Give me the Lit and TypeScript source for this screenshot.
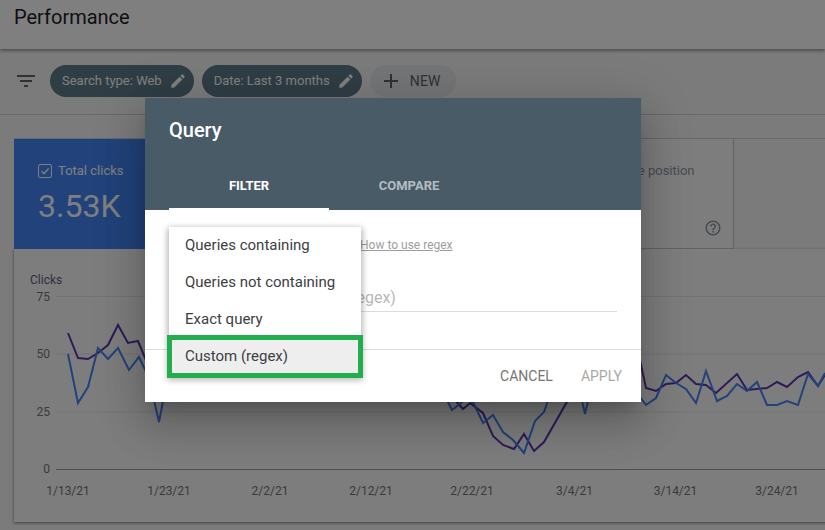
import { LitElement, html, css, svg } from "lit";
import { customElement } from "lit/decorators.js";

const PENCIL = "M3 17.25V21h3.75L17.81 9.94l-3.75-3.75L3 17.25zM20.71 7.04c.39-.39.39-1.02 0-1.41l-2.34-2.34c-.39-.39-1.02-.39-1.41 0l-1.83 1.83 3.75 3.75 1.83-1.83z";
const FILTER = "M10 18h4v-2h-4v2zM3 6v2h18V6H3zm3 7h12v-2H6v2z";
const ADD = "M19 13h-6v6h-2v-6H5v-2h6V5h2v6h6v2z";
const HELP = "M11 18h2v-2h-2v2zm1-16C6.48 2 2 6.48 2 12s4.48 10 10 10 10-4.48 10-10S17.52 2 12 2zm0 18c-4.41 0-8-3.59-8-8s3.59-8 8-8 8 3.59 8 8-3.59 8-8 8zm0-14c-2.21 0-4 1.79-4 4h2c0-1.1.9-2 2-2s2 .9 2 2c0 2-3 1.75-3 5h2c0-2.25 3-2.5 3-5 0-2.21-1.79-4-4-4z";

const BLUE = "68,354 78,403 88,387 98,348 108,359 118,348 129,370 139,357 149,378 159,422 169,370 300,370 440,380 448,402 452,410 461,403 464,400 473,402 483,423 493,415 503,432 513,440 524,453 535,421 544,412 555,380 575,370 585,414 595,370 630,370 640,397 646,405 656,398 666,375 676,383 686,389 696,403 706,371 717,401 727,396 737,384 747,391 757,382 767,405 777,405 787,401 798,405 808,374 818,386 825,373";
const PURPLE = "68,333 78,358 88,359 98,353 108,345 118,325 128,343 138,341 150,370 300,360 440,380 455,400 463,409 470,403 483,413 493,436 503,445 514,449 524,434 534,451 544,442 564,407 580,380 630,340 640,360 646,388 656,391 666,384 676,383 686,375 696,384 706,385 716,393 737,374 747,390 767,388 777,382 787,387 798,377 808,372 818,386 825,375";

const DATES: [number, string][] = [[68, "1/13/21"], [169, "1/23/21"], [270, "2/2/21"], [371, "2/12/21"], [472, "2/22/21"], [574.5, "3/4/21"], [675.5, "3/14/21"], [777, "3/24/21"]];
const YS: [number, string][] = [[296.5, "75"], [354, "50"], [412, "25"]];

const icon = (d: string, size: number) => html`<svg class="ic" width=${size} height=${size} viewBox="0 0 24 24"><path d=${d}></path></svg>`;

@customElement("app-root")
export class AppRoot extends LitElement {
  static styles = css`
    :host { display: block; position: relative; width: 825px; height: 530px; overflow: hidden; background: #f6f6f6; font-family: Roboto, "Liberation Sans", sans-serif; color: #202124; }
    .ic { display: block; fill: currentColor; flex: none; }
    header { height: 49px; display: flex; padding: 5px 14px 0; box-sizing: border-box; background: #fff; font-size: 20px; line-height: 24px; font-weight: 400; box-shadow: 0 2px 3px rgba(0,0,0,.35); position: relative; color: #1c1c28; }
    .bar { height: 66px; box-sizing: border-box; padding: 16px 0 0 14px; display: flex; align-items: flex-start; gap: 8px; border-bottom: 1px solid #d0d0d0; }
    .filter { width: 24px; height: 32px; margin-right: 4px; display: flex; align-items: center; color: #5f6368; }
    .chip { height: 32px; border-radius: 16px; background: #5f7b8b; color: #fff; font-size: 13px; line-height: 30px; display: flex; align-items: center; gap: 7px; padding: 0 7px 0 12px; box-sizing: border-box; }
    .chip.new { background: #e8eaed; color: #5f6368; font-size: 14px; gap: 7px; width: 86px; padding: 0 8px 0 9px; letter-spacing: .2px; }
    .tiles { display: flex; margin: 24px 0 0 14px; height: 110px; position: relative; }
    .tiles::before { content: ""; position: absolute; left: 0; top: -1px; width: 811px; height: 1px; background: #d0d0d0; }
    .tile { width: 180px; box-sizing: border-box; padding: 25px 24px 0; background: #fbfbfb; border-right: 1px solid #c4c4c4; border-bottom: 1px solid #c4c4c4; color: #8a9aa6; position: relative; }
    .tile.on { background: #4285f4; color: #fff; border: 0; }
    .tname { display: flex; align-items: center; gap: 6px; font-size: 13px; line-height: 14px; }
    .box { width: 12px; height: 12px; border: 1px solid currentColor; border-radius: 2px; display: flex; }
    .tval { font-size: 32px; line-height: 38px; margin-top: 9px; letter-spacing: 0; }
    .help { position: absolute; right: 11px; bottom: 11px; }
    .chart { margin-left: 14px; width: 840px; height: 273px; background: #fbfbfb; box-shadow: 0 1px 3px rgba(0,0,0,.5); }
    .chart svg { display: block; }
    .chart text { font-family: Roboto, "Liberation Sans", sans-serif; font-size: 12px; fill: #757575; }
    .chart text.lab { fill: #5f5f80; }
    .scrim { position: absolute; inset: 0; background: rgba(0,0,0,.5); }
    .dialog { position: absolute; left: 145px; top: 98px; width: 496px; height: 304px; background: #fff; box-shadow: 0 11px 15px -7px rgba(0,0,0,.2), 0 24px 38px 3px rgba(0,0,0,.14), 0 9px 46px 8px rgba(0,0,0,.12); display: flex; flex-direction: column; }
    .dhead { height: 112px; background: #485b67; color: #fff; box-sizing: border-box; padding: 20px 24px 0; display: flex; flex-direction: column; }
    .dtitle { font-size: 20px; line-height: 24px; font-weight: 500; }
    .tabs { display: flex; margin-top: 23px; }
    .tab { width: 160px; height: 45px; box-sizing: border-box; padding-top: 13px; text-align: center; font-size: 13px; line-height: 16px; font-weight: 700; color: rgba(255,255,255,.6); }
    .tab.act { color: #fff; border-bottom: 2px solid #fff; }
    .dbody { flex: 1; position: relative; display: flex; flex-direction: column; padding: 0 24px; }
    .howto { margin-left: 191px; margin-top: 28px; font-size: 12px; line-height: 14px; color: #9e9e9e; text-decoration: underline; align-self: flex-start; }
    .field { margin-top: 28px; height: 32px; box-sizing: border-box; border-bottom: 1px solid #dadce0; font-size: 16px; line-height: 28px; color: #b8b8b8; padding: 4px 0 0 117px; }
    .foot { margin: 37px -24px 0; height: 51px; border-top: 1px solid #dadce0; display: flex; justify-content: flex-end; align-items: center; gap: 28px; padding-right: 19px; font-size: 14px; color: #757575; }
    .foot .off { color: #a8a8a8; }
    .menu { position: absolute; left: 24px; top: 17px; width: 192px; background: #fff; box-shadow: 0 3px 6px 2px rgba(0,0,0,.2), 0 1px 8px rgba(0,0,0,.12); }
    .item { height: 37px; box-sizing: border-box; padding: 0 16px 2px; display: flex; align-items: center; font-size: 15px; color: #3c4043; }
    .item.hi { background: #eee; outline: 5px solid #22ad4f; outline-offset: -3px; height: 39px; margin-top: -1px; padding-bottom: 1px; }
  `;

  render() {
    return html`
      <header>Performance</header>
      <div class="bar">
        <div class="filter">${icon(FILTER, 24)}</div>
        <div class="chip">Search type: Web ${icon(PENCIL, 18)}</div>
        <div class="chip">Date: Last 3 months ${icon(PENCIL, 18)}</div>
        <div class="chip new">${icon(ADD, 24)} NEW</div>
      </div>
      <div class="tiles">
        <div class="tile on">
          <div class="tname"><span class="box"><svg width="12" height="12" viewBox="0 0 12 12"><path d="M2.5 6.2 5 8.7 9.6 3.6" fill="none" stroke="currentColor" stroke-width="1.5"></path></svg></span>Total clicks</div>
          <div class="tval">3.53K</div>
        </div>
        <div class="tile"></div>
        <div class="tile"></div>
        <div class="tile">
          <div class="tname"><span class="box"></span>Average position</div>
          <div class="help">${icon(HELP, 18)}</div>
        </div>
      </div>
      <div class="chart">
        <svg width="811" height="273" viewBox="14 249 811 273">
          <text class="lab" x="30" y="284">Clicks</text>
          ${YS.map(([y, t]) => svg`<line x1="56" x2="825" y1=${y} y2=${y} stroke="#e6e6e6"></line><text x="50" y=${y + 4} text-anchor="end">${t}</text>`)}
          <line x1="56" x2="825" y1="469.5" y2="469.5" stroke="#9e9e9e"></line>
          <text x="50" y="473" text-anchor="end">0</text>
          ${DATES.map(([x, t]) => svg`<text x=${x} y="495" text-anchor="middle">${t}</text>`)}
          <polyline points=${PURPLE} fill="none" stroke="#5e35b1" stroke-width="2"></polyline>
          <polyline points=${BLUE} fill="none" stroke="#4285f4" stroke-width="2"></polyline>
        </svg>
      </div>
      <div class="scrim"></div>
      <div class="dialog">
        <div class="dhead">
          <div class="dtitle">Query</div>
          <div class="tabs"><div class="tab act">FILTER</div><div class="tab">COMPARE</div></div>
        </div>
        <div class="dbody">
          <div class="howto">How to use regex</div>
          <div class="field">Custom (regex)</div>
          <div class="foot"><span>CANCEL</span><span class="off">APPLY</span></div>
          <div class="menu">
            <div class="item">Queries containing</div>
            <div class="item">Queries not containing</div>
            <div class="item">Exact query</div>
            <div class="item hi">Custom (regex)</div>
          </div>
        </div>
      </div>
    `;
  }
}
